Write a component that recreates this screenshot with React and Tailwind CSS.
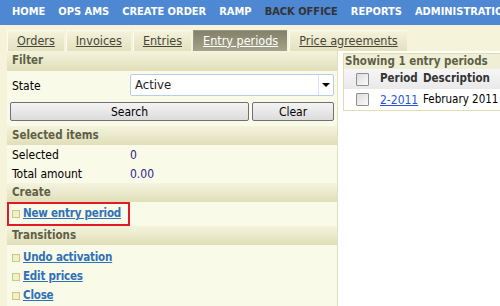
import React from 'react';

const NAV = ['HOME', 'OPS AMS', 'CREATE ORDER', 'RAMP', 'BACK OFFICE', 'REPORTS', 'ADMINISTRATION'];
const TABS = ['Orders', 'Invoices', 'Entries', 'Entry periods', 'Price agreements'];

function SectionHeader({ children, tall }) {
  return (
    <div
      className={[
        'flex items-center pl-[5px] font-bold text-[11.5px] text-[#5f5f48] bg-gradient-to-b from-[#f4f4df] to-[#e0dfb8]',
        tall ? 'h-[20px]' : 'h-[19px]',
      ].join(' ')}
    >
      {children}
    </div>
  );
}

function Bullet() {
  return <span className="inline-block w-[8px] h-[8px] bg-[#f3f1c4] border border-[#c9c68e] mr-[3px] shrink-0" />;
}

function ActionLink({ children }) {
  return (
    <div className="flex items-center h-[19px] pl-[5px] whitespace-nowrap">
      <Bullet />
      <a href="#" className="font-bold text-[11.5px] tracking-[-0.2px] text-[#2f71b8] underline">
        {children}
      </a>
    </div>
  );
}

function Checkbox() {
  return (
    <span className="inline-block w-[13px] h-[13px] border border-[#8f8f8f] bg-gradient-to-br from-[#dcdcdc] to-[#fbfbfb] rounded-[1px]" />
  );
}

export default function App() {
  return (
    <div
      className="w-[500px] h-[306px] overflow-hidden bg-[#f5f3da] text-[12px] text-black"
      style={{ fontFamily: '"DejaVu Sans Condensed", "DejaVu Sans", sans-serif' }}
    >
      {/* Top navigation */}
      <div className="h-[25px] bg-[#4f88d2] flex items-center pl-[12px] gap-[13px] whitespace-nowrap overflow-hidden">
        {NAV.map((n) => (
          <span
            key={n}
            className={[
              'text-[11px] font-bold shrink-0',
              n === 'BACK OFFICE' ? 'text-[#333]' : 'text-white',
            ].join(' ')}
          >
            {n}
          </span>
        ))}
      </div>

      {/* Tabs */}
      <div className="h-[26px] flex items-end pl-[7px] gap-[2px]">
        {TABS.map((t) => {
          const active = t === 'Entry periods';
          return (
            <div
              key={t}
              className={[
                'h-[21px] px-[9px] flex items-center text-[12.5px] underline whitespace-nowrap border-l border-t shrink-0',
                active
                  ? 'bg-gradient-to-b from-[#83816a] to-[#a4a287] text-white border-[#9a9880]'
                  : 'bg-gradient-to-b from-[#f4f3dc] to-[#e3e1be] text-[#46463a] border-[#fbfbee]',
              ].join(' ')}
            >
              {t}
            </div>
          );
        })}
      </div>

      {/* Content */}
      <div className="flex h-[255px]">
        <div className="w-[7px] shrink-0" />

        {/* Left panel */}
        <div className="w-[331px] shrink-0 bg-[#fafae9] border-r border-[#e2e0c0]">
          <SectionHeader tall>Filter</SectionHeader>
          <div className="px-[3px] pt-[3px] pb-[5px]">
            <div className="flex items-start">
              <span className="w-[120px] pl-[2px] pt-[3px]">State</span>
              <div className="flex-1 h-[22px] bg-white border border-[#b6cdee] rounded-[2px] flex items-center">
                <span className="flex-1 pl-[4px] text-[13px] text-[#222]">Active</span>
                <div className="w-[15px] h-full border-l border-[#d7e3f4] flex items-center justify-center">
                  <span className="w-0 h-0 border-l-[4px] border-r-[4px] border-t-[4px] border-l-transparent border-r-transparent border-t-black" />
                </div>
              </div>
            </div>
            <div className="flex gap-[3px] mt-[6px]">
              <button className="w-[239px] h-[19px] border border-[#707070] rounded-[2px] bg-gradient-to-b from-[#f4f4f4] to-[#dcdcdc] text-[12px] leading-none">
                Search
              </button>
              <button className="flex-1 h-[19px] border border-[#707070] rounded-[2px] bg-gradient-to-b from-[#f4f4f4] to-[#dcdcdc] text-[12px] leading-none">
                Clear
              </button>
            </div>
          </div>

          <SectionHeader>Selected items</SectionHeader>
          <div className="flex items-center h-[19px] pl-[5px]">
            <span className="w-[118px]">Selected</span>
            <span className="text-[#2d1c8c]">0</span>
          </div>
          <div className="flex items-center h-[19px] pl-[5px]">
            <span className="w-[118px]">Total amount</span>
            <span className="text-[#2d1c8c]">0.00</span>
          </div>

          <SectionHeader>Create</SectionHeader>
          <div className="w-fit h-[24px] pr-[7px] border-2 border-l-0 border-[#e01b24] flex items-center relative">
            <span className="absolute left-0 top-[-2px] bottom-[-2px] w-[2px] bg-[#e01b24]" />
            <ActionLink>New entry period</ActionLink>
          </div>

          <SectionHeader>Transitions</SectionHeader>
          <div className="pt-[3px]">
            <ActionLink>Undo activation</ActionLink>
            <ActionLink>Edit prices</ActionLink>
            <ActionLink>Close</ActionLink>
          </div>
        </div>

        {/* Right panel */}
        <div className="flex-1 bg-white pl-[5px] pt-[2px] min-w-0">
          <div className="border border-[#deddb4] border-r-0 bg-white">
            <div className="h-[15px] flex items-center pl-[1px] font-bold text-[11.5px] text-[#5f5f48] bg-[#efefd6] whitespace-nowrap">
              Showing 1 entry periods
            </div>
            <div className="h-[20px] flex items-center bg-gradient-to-b from-[#f6f6f6] to-[#e9e9e9] whitespace-nowrap">
              <div className="w-[36px] shrink-0 flex justify-center"><Checkbox /></div>
              <span className="w-[43px] shrink-0 font-bold text-[11.5px] text-[#333]">Period</span>
              <span className="shrink-0 font-bold text-[11.5px] text-[#333]">Description</span>
            </div>
            <div className="h-[21px] flex items-center whitespace-nowrap">
              <div className="w-[36px] shrink-0 flex justify-center"><Checkbox /></div>
              <a href="#" className="w-[43px] shrink-0 text-[#2752d8] underline">2-2011</a>
              <span className="shrink-0 text-[11.5px]">February 2011</span>
            </div>
          </div>
        </div>
      </div>
    </div>
  );
}
